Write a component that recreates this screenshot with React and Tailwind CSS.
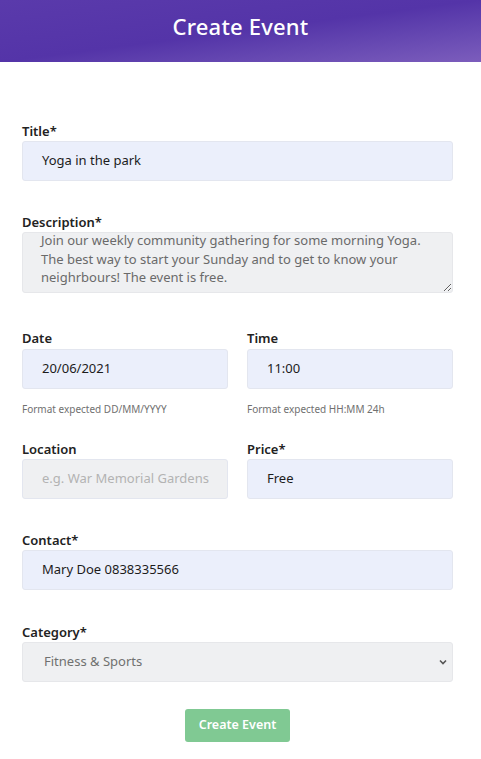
import React from "react";

const font = { fontFamily: '"Noto Sans", "DejaVu Sans", sans-serif' };

function Label({ children }) {
  return (
    <div className="text-[13px] font-semibold leading-[18px] text-[#222]">{children}</div>
  );
}

function Field({ value, placeholder, className = "" }) {
  return (
    <div
      className={
        "h-10 rounded-[3px] border border-[#e3e6ef] flex items-center pl-[19px] text-[13px] " +
        (placeholder ? "bg-[#eff0f2] text-[#b3b3b3] " : "bg-[#ebeffb] text-[#1c1c1c] ") +
        className
      }
    >
      {value || placeholder}
    </div>
  );
}

export default function App() {
  return (
    <div className="w-[481px] min-h-[759px] bg-white" style={font}>
      <div className="h-[62px] flex items-center justify-center bg-gradient-to-br from-[#5a3aab] via-[#5434a8] to-[#7c5dbc]">
        <h1 className="text-white text-[22px] font-medium tracking-[0.2px] -mt-[9px]">Create Event</h1>
      </div>

      <div className="pl-[22px] pr-[28px] pt-[60px] pb-[17px]">
        <Label>Title*</Label>
        <Field value="Yoga in the park" className="mt-px" />

        <div className="mt-[32px]">
          <Label>Description*</Label>
          <div className="mt-px h-[61px] rounded-[3px] border border-[#e6e7ea] bg-[#eff0f2] overflow-hidden resize-y pl-[18px] pr-2 text-[13px] leading-[18.5px] text-[#6a6a6a]">
            <div className="-mt-[2px] whitespace-nowrap">
              <div>Join our weekly community gathering for some morning Yoga.</div>
              <div>The best way to start your Sunday and to get to know your</div>
              <div>neighrbours! The event is free.</div>
            </div>
          </div>
        </div>

        <div className="mt-[36px] grid grid-cols-2 gap-x-[19px]">
          <div>
            <Label>Date</Label>
            <Field value="20/06/2021" className="mt-[2px]" />
            <div className="mt-[13px] text-[10px] leading-[14px] text-[#707070]">Format expected DD/MM/YYYY</div>
          </div>
          <div>
            <Label>Time</Label>
            <Field value="11:00" className="mt-[2px]" />
            <div className="mt-[13px] text-[10px] leading-[14px] text-[#707070]">Format expected HH:MM 24h</div>
          </div>
          <div className="mt-[24px]">
            <Label>Location</Label>
            <Field placeholder="e.g. War Memorial Gardens" className="mt-px" />
          </div>
          <div className="mt-[24px]">
            <Label>Price*</Label>
            <Field value="Free" className="mt-px" />
          </div>
        </div>

        <div className="mt-[32px]">
          <Label>Contact*</Label>
          <Field value="Mary Doe 0838335566" className="mt-px" />
        </div>

        <div className="mt-[33px]">
          <Label>Category*</Label>
          <div className="mt-px h-10 rounded-[3px] border border-[#e6e7ea] bg-[#eff0f2] flex items-center justify-between pl-[21px] pr-[4px] text-[13px] text-[#707070]">
            <span>Fitness &amp; Sports</span>
            <svg width="10" height="10" viewBox="0 0 10 10">
              <path d="M2 3.5 L5 6.5 L8 3.5" fill="none" stroke="#555" strokeWidth="1.6" />
            </svg>
          </div>
        </div>

        <div className="mt-[27px] flex justify-center">
          <button className="h-[33px] w-[105px] rounded-[3px] bg-[#80c993] text-white text-[12.5px] font-semibold">
            Create Event
          </button>
        </div>
      </div>
    </div>
  );
}
